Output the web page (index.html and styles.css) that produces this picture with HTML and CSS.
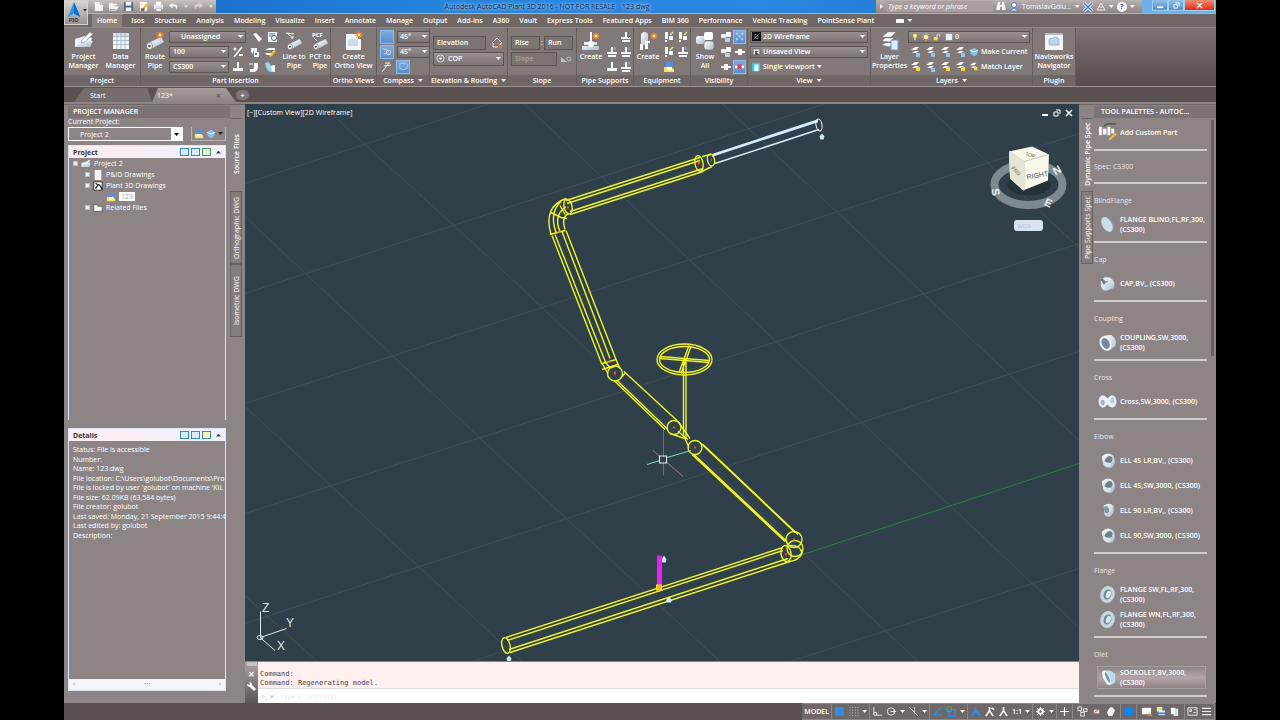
FILE: index.html
```html
<!DOCTYPE html>
<html lang="en">
<head>
<meta charset="utf-8">
<title>Autodesk AutoCAD Plant 3D 2016 - 123.dwg</title>
<link rel="stylesheet" href="styles.css">
</head>
<body>
<svg class="defs" aria-hidden="true">
  <defs>
    <linearGradient id="metal" x1="0" y1="0" x2="1" y2="1"><stop offset="0" stop-color="#fff"/><stop offset="1" stop-color="#a9bccf"/></linearGradient>
  </defs>
  <symbol id="i-new" viewBox="0 0 12 12"><path d="M2 1h6l3 3v7H2z" fill="#f7f2f2"/><path d="M8 1v3h3" fill="none" stroke="#aaa"/></symbol>
  <symbol id="i-open" viewBox="0 0 12 12"><path d="M1 2h4l1 1h4v2H1z" fill="#e8efe9"/><path d="M1 10V4h4l4 2h3l-3 5z" fill="#f4f4ee"/><path d="M2 9l8 1" stroke="#6bb08b"/></symbol>
  <symbol id="i-save" viewBox="0 0 12 12"><path d="M1 1h10v10H1z" fill="#536b83"/><path d="M3 1h6v4H3zM3 7h6v4H3z" fill="#f5f7f9"/></symbol>
  <symbol id="i-saveas" viewBox="0 0 12 12"><path d="M2 1h8v10H2z" fill="#f5f2ea"/><path d="M4 9l5-6 2 1-5 6z" fill="#e9b42c"/><path d="M3 8h4v3H3z" fill="#536b83"/></symbol>
  <symbol id="i-print" viewBox="0 0 12 12"><path d="M3 1h6v4H3z" fill="#fff"/><path d="M1 4h10v5H1z" fill="#e6e6ee"/><path d="M3 8h6v3H3z" fill="#fff" stroke="#889"  stroke-width=".6"/></symbol>
  <symbol id="i-undo" viewBox="0 0 12 12"><path d="M5 2L1 5l4 3V6c3-1 4 1 4 3 3-4 0-6-4-5z" fill="#eef4fb"/></symbol>
  <symbol id="i-redo" viewBox="0 0 12 12"><path d="M7 2l4 3-4 3V6C4 5 3 7 3 9 0 5 3 3 7 4z" fill="#ddd5d5"/></symbol>
  <symbol id="i-project" viewBox="0 0 20 20"><path d="M1 8l10-3 7 2-2 9H1z" fill="#eef2f6"/><path d="M1 16h15l3-6H6z" fill="url(#metal)"/><path d="M8 9l8-8 3 2-8 8-4 1z" fill="#fff" stroke="#8d97a3" stroke-width=".7"/></symbol>
  <symbol id="i-data" viewBox="0 0 20 20"><path d="M2 2h16v16H2z" fill="#eef3f8"/><path d="M2 2h16v3H2z" fill="#cfe0f3"/><path d="M2 5.500h16M2 9.500h16M2 13.500h16M6 2v16M10 2v16M14 2v16" stroke="#98a7ba" stroke-width=".7"/></symbol>
  <symbol id="i-pipe" viewBox="0 0 20 20"><path d="M3 12L16 6l3 5L6 18z" fill="url(#metal)"/><ellipse cx="4.500" cy="15" rx="3" ry="3.500" fill="#fff" stroke="#646c75" stroke-width=".8"/><circle cx="4.500" cy="15" r="1.300" fill="#4d4a4a"/></symbol>
  <symbol id="i-spark" viewBox="0 0 8 8"><path d="M4 0l1 2 2-1-1 2 2 1-2 1 1 2-2-1-1 2-1-2-2 1 1-2-2-1 2-1-1-2 2 1z" fill="#ff8a24"/><circle cx="4" cy="4" r="1.200" fill="#fff0b0"/></symbol>
  <symbol id="i-route" viewBox="0 0 20 20"><use href="#i-pipe" width="20" height="20"/><use href="#i-spark" x="11" y="0" width="8" height="8"/></symbol>
  <symbol id="i-line" viewBox="0 0 20 20"><path d="M2 2l8 1M4 3l5 4M7 7h2V5" fill="none" stroke="#fff"/><use href="#i-pipe" x="2" y="3" width="17" height="17"/></symbol>
  <symbol id="i-ortho" viewBox="0 0 20 20"><path d="M2 3h12v5h3v11H2z" fill="#f2f6fa"/><path d="M4 9l5-2 5 2v6H4z" fill="#cbdcec"/><use href="#i-spark" x="11" y="0" width="8" height="8"/></symbol>
  <symbol id="i-support" viewBox="0 0 20 20"><path d="M9 1h2v10H9z" fill="#f5f5f5"/><path d="M3 11h13v3H3zM1 15h17v4H1z" fill="url(#metal)"/><circle cx="10" cy="13" r="3" fill="#fff"/><use href="#i-spark" x="11" y="1" width="8" height="8"/></symbol>
  <symbol id="i-equip" viewBox="0 0 20 20"><path d="M3 3q4-4 7 0v11H3z" fill="url(#metal)"/><path d="M2 13h3v6H2zM7 10h5v2h-2v6H7z" fill="#fff"/><use href="#i-spark" x="12" y="1" width="8" height="8"/></symbol>
  <symbol id="i-show" viewBox="0 0 20 20"><rect x="1" y="5" width="9" height="8" rx="2" fill="url(#metal)"/><rect x="9" y="1" width="9" height="8" rx="2" fill="#fff"/><rect x="9" y="10" width="10" height="9" rx="3" fill="url(#metal)" stroke="#777" stroke-width=".6"/></symbol>
  <symbol id="i-layers" viewBox="0 0 20 20"><path d="M2 6l6-5h8l-5 5zM2 10l3-3h9l-4 4zM2 14l3-2h8l-4 4z" fill="#fff" stroke="#777" stroke-width=".5"/><path d="M11 9h7v10h-7z" fill="#dcecff" stroke="#7095c7"/></symbol>
  <symbol id="i-navis" viewBox="0 0 20 20"><path d="M1 2h18v17H1z" fill="#f4f6f8"/><path d="M1 2h18v2H1z" fill="#aebac6"/><path d="M5 8l7-2 3 2v6H5z" fill="#bcd6ee" stroke="#7da2c4" stroke-width=".6"/></symbol>
  <symbol id="i-tag" viewBox="0 0 12 12"><path d="M2 3l3-1 6 6-3 3z" fill="#fff"/></symbol>
  <symbol id="i-doc" viewBox="0 0 12 12"><path d="M1 1h9v10H1z" fill="#eaf2fa"/><path d="M2 3h6M2 5h4" stroke="#4f7fa8"/><circle cx="7" cy="7" r="2.500" fill="#fff" stroke="#567"/></symbol>
  <symbol id="i-slash" viewBox="0 0 12 12"><path d="M2 11L10 1" stroke="#fff" stroke-width="1.500"/><circle cx="3" cy="3" r="1.500" fill="#fff"/><path d="M7 8h4v2H7z" fill="#fff"/></symbol>
  <symbol id="i-elbow" viewBox="0 0 12 12"><path d="M6 2h4v5q-1 4-5 4H2V8h3q1 0 1-2z" fill="#f3f6fa"/><path d="M1 3h4" stroke="#fff"/></symbol>
  <symbol id="i-tee" viewBox="0 0 12 12"><path d="M5 1h2v6h4v3H1V7h4z" fill="#f2f6fa"/></symbol>
  <symbol id="i-parts" viewBox="0 0 12 12"><path d="M3 6V2h6v4h2v5H6V5H5v3z" fill="#eef2f6"/><path d="M7 7h2v2H7z" fill="#777"/></symbol>
  <symbol id="i-yellow" viewBox="0 0 12 12"><path d="M1 4l4-2h6v2H1zM1 7h7v2H3z" fill="#fff"/><path d="M5 10l5-6 2 1-5 6z" fill="#f2c72e"/></symbol>
  <symbol id="i-blue" viewBox="0 0 12 12"><path d="M1 4l5-3 5 3-2 6-3 1-4-3z" fill="#7fc2f1"/><path d="M1 4l5 2 5-2" stroke="#fff" fill="none"/></symbol>
  <symbol id="i-bend" viewBox="0 0 12 12"><path d="M1 2l4-1 2 4 4-1v7H6Q2 9 1 2z" fill="#9bd0f5"/><path d="M7 5l4-1v7l-3-1z" fill="#f3faff"/></symbol>
  <symbol id="i-lay" viewBox="0 0 12 12"><path d="M1 4l4-3h4L6 4zM2 7l3-2h4L6 7z" fill="#fff"/><path d="M6 7h4v4H6z" fill="#8cc7f7"/></symbol>
  <symbol id="i-layy" viewBox="0 0 12 12"><path d="M1 4l4-3h4L6 4zM2 7l3-2h4L6 7z" fill="#fff"/><path d="M6 6h4v4H6z" fill="#ffd23c"/></symbol>
  <symbol id="i-compass" viewBox="0 0 12 12"><path d="M2 3q4-2 8 0v5q-4 3-8 0zM5 2l2 2" fill="none" stroke="#a9d0fb"/></symbol>
  <symbol id="i-snap" viewBox="0 0 12 12"><path d="M1 3l5 1M2 9l4-3" stroke="#b9d8fb"/><circle cx="7" cy="7" r="2.500" fill="#b88fae" stroke="#e9dbe9"/></symbol>
  <symbol id="i-dots" viewBox="0 0 12 12"><path d="M2 2h2v2H2zM8 2h2v2H8zM5 5h2v2H5zM2 8h2v2H2zM8 8h2v2H8z" fill="#b5dcff"/></symbol>
  <symbol id="i-eraser" viewBox="0 0 12 12"><path d="M1 11L8 2M4 2h5M3 5l7-1" stroke="#eee" fill="none"/></symbol>
  <symbol id="i-sup" viewBox="0 0 12 12"><path d="M5 1h2v5h4v2H1V6h4zM2 9h8v2H2z" fill="#f2f4f7"/><path d="M9 1v3" stroke="#7abaf0"/></symbol>
  <symbol id="i-supr" viewBox="0 0 12 12"><path d="M5 1h2v5h4v2H1V6h4zM2 9h8v2H2z" fill="#f2f4f7"/><path d="M8 4l3 3M11 4L8 7" stroke="#e9453c"/></symbol>
  <symbol id="i-eq" viewBox="0 0 12 12"><path d="M2 1h3v7H2zM6 5h4v4H6zM2 9h2v2H2z" fill="#f3f5f8"/><path d="M7 4l3-3" stroke="#dfeaa6" stroke-width="1.500"/></symbol>
  <symbol id="i-cubes" viewBox="0 0 12 12"><rect x="1" y="3" width="5" height="4" rx="1" fill="#eef2f8"/><rect x="6" y="1" width="5" height="5" rx="1" fill="#fff"/><rect x="5" y="7" width="5" height="4" rx="1" fill="#b5d6f5"/></symbol>
  <symbol id="i-valve" viewBox="0 0 12 12"><path d="M1 5h10v2H1zM4 3h4v6H4z" fill="#f5f5f5"/></symbol>
  <symbol id="i-valver" viewBox="0 0 12 12"><path d="M1 5h3v3H1zM8 5h3v3H8z" fill="#f5f5f5"/><path d="M4 4l4 4M8 4L4 8" stroke="#e13c46" stroke-width="2"/></symbol>
  <symbol id="i-vport" viewBox="0 0 12 12"><path d="M1 1h10v10H1z" fill="#36c3e8"/><path d="M4 3h5v8H4z" fill="#f4fbff"/></symbol>
  <symbol id="i-black" viewBox="0 0 12 12"><path d="M0 0h12v12H0z" fill="#111"/><path d="M4 3l4 2v4L4 8zM2 10l8-8" stroke="#ddd" stroke-width=".6" fill="none"/></symbol>
  <symbol id="i-view" viewBox="0 0 12 12"><path d="M1 2h10v9H1z" fill="#5b5556"/><path d="M2 3h8v2H4v5H2zM6 7l4-2v5z" fill="#f2eeee"/></symbol>
  <symbol id="i-bulb" viewBox="0 0 12 12"><circle cx="6" cy="4" r="3" fill="#fff06a"/><path d="M5 6h2v5H5z" fill="#efe6a0"/></symbol>
  <symbol id="i-sun" viewBox="0 0 12 12"><path d="M6 0v12M0 6h12M2 2l8 8M10 2l-8 8" stroke="#ffd95a"/><circle cx="6" cy="6" r="3" fill="#fff2a0"/></symbol>
  <symbol id="i-lock" viewBox="0 0 12 12"><path d="M1 6h6v5H1z" fill="#ffd94b"/><path d="M6 6V3q2-3 4 0v2" fill="none" stroke="#f3e6b0" stroke-width="1.500"/></symbol>
  <symbol id="i-home" viewBox="0 0 12 12"><path d="M1 6l5-5 5 5-2 1v1M2 6v4h5" fill="none" stroke="#f4efef"/><path d="M7 7l4 4M11 8l-3 3" stroke="#ee6c49" stroke-width="1.500"/></symbol>
  <symbol id="i-folder" viewBox="0 0 12 10"><path d="M1 1h4l1 2h5v6H1z" fill="#fff" stroke="#333" stroke-width=".7"/></symbol>
  <symbol id="i-sheet" viewBox="0 0 12 12"><path d="M2 0h8v12H2z" fill="#fff1f1"/></symbol>
  <symbol id="i-p3d" viewBox="0 0 12 12"><path d="M1 1h10v10H1z" fill="#fff" stroke="#222"/><path d="M3 3l5 2 3 5M3 9l3-4" stroke="#111" stroke-width="1.500" fill="none"/></symbol>
  <symbol id="i-dwg" viewBox="0 0 12 12"><path d="M3 1h7v6H3z" fill="#5c8fd6"/><path d="M1 6h6l4 2v3H1z" fill="#f4e06a"/><path d="M4 6h5v3H4z" fill="#fff"/></symbol>
  <symbol id="p-disc" viewBox="0 0 20 20"><ellipse cx="11" cy="10" rx="5" ry="8.500" transform="rotate(-30 11 10)" fill="#8597a9"/><ellipse cx="9.500" cy="10" rx="5" ry="8.500" transform="rotate(-30 9.500 10)" fill="#cbdbe8"/></symbol>
  <symbol id="p-cap" viewBox="0 0 20 20"><path d="M3 8q3-6 10-4 7 5 3 11l-8 3q-6-1-5-10z" fill="url(#metal)"/><path d="M3 6l3 5 5-4-4-3z" fill="#6b747e"/><path d="M5 5l3 3 3-1-3-4z" fill="#dbe9f5"/></symbol>
  <symbol id="p-coup" viewBox="0 0 20 20"><path d="M6 3l8-1q7 5 4 12l-7 5z" fill="url(#metal)"/><ellipse cx="8" cy="11" rx="6" ry="8" transform="rotate(-25 8 11)" fill="#eef6fc"/><ellipse cx="8" cy="11" rx="4" ry="6" transform="rotate(-25 8 11)" fill="#78889a"/></symbol>
  <symbol id="p-cross" viewBox="0 0 20 20"><ellipse cx="5" cy="10" rx="4.500" ry="6.500" fill="#dceaf6"/><ellipse cx="15" cy="10" rx="4.500" ry="6.500" fill="#dceaf6"/><path d="M5 6l10 8M5 14l10-8" stroke="#eaf4fc" stroke-width="5"/><ellipse cx="5" cy="11" rx="2" ry="3" fill="#a3b4c4"/><ellipse cx="15" cy="9" rx="2" ry="3" fill="#b4c7d8"/></symbol>
  <symbol id="p-ell" viewBox="0 0 20 20"><path d="M4 6q6-6 12-1 4 7-1 12-5 2-9-2z" fill="url(#metal)"/><ellipse cx="11" cy="10" rx="3.500" ry="5" transform="rotate(35 11 10)" fill="#6f7f8c"/><path d="M4 6q3 8 10 6l-2 5-6-2z" fill="#d5e5f2"/></symbol>
  <symbol id="p-ell9" viewBox="0 0 20 20"><path d="M6 5q6-4 10 0 2 7-3 11-4 2-6-2z" fill="url(#metal)"/><ellipse cx="9" cy="9" rx="2.500" ry="4" transform="rotate(-15 9 9)" fill="#8495a6"/></symbol>
  <symbol id="p-flange" viewBox="0 0 20 20"><ellipse cx="10" cy="10" rx="7.500" ry="9" transform="rotate(20 10 10)" fill="#c3d9e5"/><ellipse cx="10" cy="10" rx="4" ry="5.500" transform="rotate(20 10 10)" fill="#76899a"/><ellipse cx="11" cy="10" rx="2.500" ry="4" transform="rotate(20 11 10)" fill="#d9e8ef"/></symbol>
  <symbol id="p-olet" viewBox="0 0 20 20"><path d="M3 4q7-4 14 2v9q-5 5-9 2z" fill="#b9dcec"/><ellipse cx="8" cy="10" rx="3.500" ry="8" transform="rotate(-25 8 10)" fill="#eaf6fc"/><ellipse cx="9" cy="10" rx="1.500" ry="6" transform="rotate(-25 9 10)" fill="#7d94a4"/></symbol>
</svg>

<div class="app">
  <header class="top">
    <button class="appbtn" aria-label="Application menu">
      <svg width="16" height="18" viewBox="0 0 16 18"><path d="M8 0l7 17-7-4-7 4z" fill="#1c9bee"/><path d="M8 0l7 17-7-4z" fill="#0b6fd0"/></svg>
      <span class="appver">P3D</span><i class="caret"></i>
    </button>
    <div class="titlebar">
      <div class="quick">
        <button aria-label="New"><svg><use href="#i-new"/></svg></button>
        <button aria-label="Open"><svg><use href="#i-open"/></svg></button>
        <button aria-label="Save"><svg><use href="#i-save"/></svg></button>
        <button aria-label="Save as"><svg><use href="#i-saveas"/></svg></button>
        <button aria-label="Plot"><svg><use href="#i-print"/></svg></button>
        <button aria-label="Undo"><svg><use href="#i-undo"/></svg></button><i class="caret"></i>
        <button aria-label="Redo"><svg><use href="#i-redo"/></svg></button><i class="caret"></i><i class="caret"></i>
      </div>
      <div class="title"><span>Autodesk AutoCAD Plant 3D 2016 - NOT FOR RESALE</span><span>123.dwg</span></div>
      <div class="info">
        <i class="caret side"></i>
        <input class="search" aria-label="Search" placeholder="Type a keyword or phrase">
        <svg width="10" height="9" viewBox="0 0 10 9"><path d="M2 0h2v3h2V0h2l2 8H6V5H4v3H0z" fill="#f4f0f0"/></svg>
        <svg width="10" height="10" viewBox="0 0 10 10"><circle cx="5" cy="3" r="2.500" fill="#fff" stroke="#4f7bd5"/><path d="M1 9q4-5 8 0z" fill="#fff" stroke="#4f7bd5"/></svg>
        <span class="user">TomislavGolu...</span><i class="caret"></i>
        <svg width="10" height="10" viewBox="0 0 10 10"><path d="M1 1l8 8M9 1L1 9" stroke="#fff" stroke-width="3"/><path d="M1 1l8 8M9 1L1 9" stroke="#3c7fd8" stroke-width="1.500"/></svg>
        <svg width="10" height="9" viewBox="0 0 10 9"><path d="M5 1l4 7H1zM3 5h4" fill="none" stroke="#f0e8f0"/></svg><i class="caret"></i>
        <button class="help" aria-label="Help">?</button><i class="caret"></i>
      </div>
      <div class="winctl"><button aria-label="Minimize"><svg viewBox="0 0 8 8"><path d="M0 5h7v2H0z" fill="#fff"/></svg></button><button aria-label="Restore"><svg viewBox="0 0 8 8"><path d="M3 1h4v4M1 3h4v4H1z" fill="none" stroke="#fff"/></svg></button><button class="close" aria-label="Close"><svg viewBox="0 0 8 8"><path d="M1 1l6 6M7 1L1 7" stroke="#fff" stroke-width="1.500"/></svg></button></div>
    </div>
    <nav class="rtabs">
      <button class="on">Home</button><button>Isos</button><button>Structure</button><button>Analysis</button><button>Modeling</button><button>Visualize</button><button>Insert</button><button>Annotate</button><button>Manage</button><button>Output</button><button>Add-ins</button><button>A360</button><button>Vault</button><button>Express Tools</button><button>Featured Apps</button><button>BIM 360</button><button>Performance</button><button>Vehicle Tracking</button><button>PointSense Plant</button>
      <button class="mini" aria-label="Ribbon display"><i class="pill"></i><i class="caret"></i></button>
    </nav>
  </header>

  <div class="ribbon">
    <section class="panel w76"><div class="pbody">
      <button class="big"><svg><use href="#i-project"/></svg><span>Project<br>Manager</span></button>
      <button class="big"><svg><use href="#i-data"/></svg><span>Data<br>Manager</span></button>
    </div><h2>Project</h2></section>

    <section class="panel w190"><div class="pbody">
      <button class="big narrow"><svg><use href="#i-route"/></svg><span>Route<br>Pipe</span></button>
      <div class="rows">
        <div><select class="wide" aria-label="Line number"><option>Unassigned</option></select><button class="ic" aria-label="Tag"><svg><use href="#i-tag"/></svg></button><button class="ic" aria-label="Line list"><svg><use href="#i-doc"/></svg></button></div>
        <div><select class="mid" aria-label="Size"><option>100</option></select><button class="ic" aria-label="Slope"><svg><use href="#i-slash"/></svg></button><button class="ic" aria-label="Weld"><svg><use href="#i-parts"/></svg></button><button class="ic" aria-label="Edit"><svg><use href="#i-yellow"/></svg></button></div>
        <div><select class="mid" aria-label="Spec"><option>CS300</option></select><button class="ic" aria-label="Stub-in"><svg><use href="#i-tee"/></svg></button><button class="ic" aria-label="Elbow"><svg><use href="#i-elbow"/></svg></button><button class="ic" aria-label="Bend"><svg><use href="#i-bend"/></svg></button></div>
      </div>
      <button class="big narrow"><svg><use href="#i-line"/></svg><span>Line to<br>Pipe</span></button>
      <button class="big narrow"><svg viewBox="0 0 20 20"><text class="pcf" x="2" y="6">PCF</text><path d="M4 7l3 3" stroke="#fff"/><use href="#i-pipe" x="2" y="3" width="17" height="17"/></svg><span>PCF to<br>Pipe</span></button>
    </div><h2>Part Insertion</h2></section>

    <section class="panel w46"><div class="pbody"><button class="big"><svg><use href="#i-ortho"/></svg><span>Create<br>Ortho View</span></button></div><h2>Ortho Views</h2></section>

    <section class="panel w53"><div class="pbody"><div class="rows">
      <div><button class="ic lit" aria-label="Toggle compass"></button><select class="deg" aria-label="Compass angle"><option>45°</option></select></div>
      <div><button class="ic lit" aria-label="Toggle snap"><svg><use href="#i-snap"/></svg></button><select class="deg" aria-label="Snap angle"><option>45°</option></select></div>
      <div><button class="ic" aria-label="Plane"><svg><use href="#i-eraser"/></svg></button><button class="ic lit" aria-label="Tolerance"><svg><use href="#i-compass"/></svg></button></div>
    </div></div><h2>Compass <i class="caret"></i></h2></section>

    <section class="panel w77"><div class="pbody"><div class="rows two">
      <div><input class="elev" aria-label="Elevation" value="Elevation"><button class="ic" aria-label="Elevation marker"><svg><use href="#i-home"/></svg></button></div>
      <div class="withicon"><svg class="target" viewBox="0 0 10 10"><circle cx="5" cy="5" r="4" fill="none" stroke="#d5e5f5"/><circle cx="5" cy="5" r="1.500" fill="#d5e5f5"/></svg><select class="cop" aria-label="Routing"><option>COP</option></select></div>
    </div></div><h2>Elevation &amp; Routing <i class="caret"></i></h2></section>

    <section class="panel w69"><div class="pbody"><div class="rows two">
      <div><input class="rise" aria-label="Rise" value="Rise"><span>:</span><input class="rise" aria-label="Run" value="Run"></div>
      <div><input class="slope" aria-label="Slope" value="Slope" disabled><button class="ic dim" aria-label="Slope toggle"><svg viewBox="0 0 12 12"><path d="M1 4l6 5H1z" fill="#eee"/><circle cx="9" cy="6" r="2" fill="none" stroke="#eee"/></svg></button></div>
    </div></div><h2>Slope</h2></section>

    <section class="panel w57"><div class="pbody">
      <button class="big narrow"><svg><use href="#i-support"/></svg><span>Create</span></button>
      <div class="rows end">
        <div><button class="ic" aria-label="Support 1"><svg><use href="#i-supr"/></svg></button></div>
        <div><button class="ic" aria-label="Support 2"><svg><use href="#i-sup"/></svg></button><button class="ic" aria-label="Support 3"><svg><use href="#i-sup"/></svg></button></div>
        <div><button class="ic" aria-label="Support 4"><svg><use href="#i-tee"/></svg></button><button class="ic" aria-label="Support 5"><svg><use href="#i-sup"/></svg></button></div>
      </div>
    </div><h2>Pipe Supports</h2></section>

    <section class="panel w57"><div class="pbody">
      <button class="big narrow"><svg><use href="#i-equip"/></svg><span>Create</span></button>
      <div class="rows">
        <div><button class="ic" aria-label="Equipment 1"><svg><use href="#i-eq"/></svg></button><button class="ic" aria-label="Equipment 2"><svg><use href="#i-eq"/></svg></button></div>
        <div><button class="ic" aria-label="Equipment 3"><svg><use href="#i-eq"/></svg></button><button class="ic" aria-label="Equipment 4"><svg><use href="#i-sup"/></svg></button></div>
        <div><button class="ic" aria-label="Equipment 5"><svg><use href="#i-dwg"/></svg></button></div>
      </div>
    </div><h2>Equipment</h2></section>

    <section class="panel w57"><div class="pbody">
      <button class="big narrow"><svg><use href="#i-show"/></svg><span>Show<br>All</span></button>
      <div class="rows">
        <div><button class="ic" aria-label="Hide"><svg><use href="#i-cubes"/></svg></button><button class="ic lit" aria-label="Toggle parts"><svg><use href="#i-dots"/></svg></button></div>
        <div><button class="ic" aria-label="Isolate"><svg><use href="#i-cubes"/></svg></button><button class="ic" aria-label="Valve"><svg><use href="#i-valve"/></svg></button></div>
        <div><button class="ic" aria-label="Insulation"><svg><use href="#i-valve"/></svg></button><button class="ic lit" aria-label="Disconnects"><svg><use href="#i-valver"/></svg></button></div>
      </div>
    </div><h2>Visibility</h2></section>

    <section class="panel w122"><div class="pbody"><div class="rows fill">
      <div class="withicon"><svg class="lead" ><use href="#i-black"/></svg><select class="full" aria-label="Visual style"><option>2D Wireframe</option></select></div>
      <div class="withicon"><svg class="lead"><use href="#i-view"/></svg><select class="full" aria-label="Saved view"><option>Unsaved View</option></select></div>
      <div><button class="text"><svg class="s10"><use href="#i-vport"/></svg>Single viewport <i class="caret"></i></button></div>
    </div></div><h2>View <i class="caret"></i></h2></section>

    <section class="panel w163"><div class="pbody">
      <button class="big prop"><svg><use href="#i-layers"/></svg><span>Layer<br>Properties</span></button>
      <div class="rows fill">
        <div class="withicon"><span class="lead strip"><svg class="s8"><use href="#i-bulb"/></svg><svg class="s8"><use href="#i-sun"/></svg><svg class="s8"><use href="#i-lock"/></svg><i class="sw"></i></span><select class="layer" aria-label="Layer"><option>0</option></select></div>
        <div><button class="ic s" aria-label="Off"><svg><use href="#i-lay"/></svg></button><button class="ic s" aria-label="Isolate"><svg><use href="#i-lay"/></svg></button><button class="ic s" aria-label="Freeze"><svg><use href="#i-lay"/></svg></button><button class="ic s" aria-label="Lock"><svg><use href="#i-lay"/></svg></button><button class="text"><svg class="s10"><use href="#i-blue"/></svg>Make Current</button></div>
        <div><button class="ic s" aria-label="On"><svg><use href="#i-layy"/></svg></button><button class="ic s" aria-label="Unisolate"><svg><use href="#i-lay"/></svg></button><button class="ic s" aria-label="Thaw"><svg><use href="#i-layy"/></svg></button><button class="ic s" aria-label="Unlock"><svg><use href="#i-layy"/></svg></button><button class="text"><svg class="s10"><use href="#i-layy"/></svg>Match Layer</button></div>
      </div>
    </div><h2>Layers <i class="caret"></i></h2></section>

    <section class="panel w43"><div class="pbody"><button class="big"><svg><use href="#i-navis"/></svg><span>Navisworks<br>Navigator</span></button></div><h2>Plugin</h2></section>
  </div>

  <div class="files">
    <button class="ftab">Start</button><button class="ftab on">123*<span>×</span></button><button class="plus" aria-label="New tab">+</button>
  </div>

  <main>
    <aside class="pm">
      <div class="pmmain">
        <h3>PROJECT MANAGER</h3>
        <label for="proj">Current Project:</label>
        <div class="projrow">
          <select id="proj"><option>Project 2</option></select>
          <div class="pmtools"><button aria-label="New project item"><svg class="s10"><use href="#i-dwg"/></svg></button><button class="rep" aria-label="Reports"><svg class="s10"><use href="#i-blue"/></svg><i class="caret"></i></button></div>
        </div>
        <section class="box tree">
          <header><b>Project</b><i class="tb"></i><i class="tb"></i><i class="tb g"></i><i class="caret up"></i></header>
          <ul>
            <li><i class="ex"></i><svg><use href="#i-project"/></svg>Project 2</li>
            <li class="l1"><i class="ex"></i><svg><use href="#i-sheet"/></svg>P&amp;ID Drawings</li>
            <li class="l1"><i class="ex"></i><svg><use href="#i-p3d"/></svg>Plant 3D Drawings</li>
            <li class="l2"><svg><use href="#i-dwg"/></svg><span class="sel">123</span></li>
            <li class="l1"><i class="ex"></i><svg><use href="#i-folder"/></svg>Related Files</li>
          </ul>
        </section>
        <section class="box details">
          <header><b>Details</b><i class="tb"></i><i class="tb"></i><i class="tb y"></i><i class="caret up"></i></header>
          <div class="dtext">
            <p>Status: File is accessible</p><p>Number:</p><p>Name: 123.dwg</p><p>File location: C:\Users\golubot\Documents\Pro</p><p>File is locked by user 'golubot' on machine 'KIL</p><p>File size: 62.09KB (63,584 bytes)</p><p>File creator: golubot</p><p>Last saved: Monday, 21 September 2015 9:44:4</p><p>Last edited by: golubot</p><p>Description:</p>
          </div>
          <div class="hbar"><span>‹</span><span>⋯</span><span>›</span></div>
        </section>
      </div>
      <div class="vtabs"><button class="on">Source Files</button><button>Orthographic DWG</button><button>Isometric DWG</button></div>
    </aside>

    <div class="center">
      <div class="canvas">
        <svg class="model" viewBox="245 103 834 558" preserveAspectRatio="xMidYMid slice">
          <g stroke="#3e505a" stroke-width="1" fill="none">
            <path d="M245 183L490 103M245 293L835 100M245 403L490 324 1079 133M245 513L490 434 1079 243M245 623L490 543 1079 351M370 694L800 555M790 661L1079 568"/>
            <path d="M245 595L317 661M245 406L490 632 522 661M245 216L490 447 720 661M320 103L490 258 918 661M524 103L1079 627M722 103L1079 440M924 103L1079 247"/>
          </g>
          <path d="M800 555L1079 463" stroke="#2c7a3d"/>
          <g class="pipe">
            <path d="M566 200L700 157M567 203L700 160M570 211L703 168M570 214L703 171"/>
            <ellipse cx="699" cy="163" rx="4" ry="8" transform="rotate(-10 699 163)"/><ellipse cx="711" cy="159.500" rx="3.500" ry="6" transform="rotate(-10 711 159.500)"/>
            <path d="M702 156l9-2M702 171l10-5"/>
            <ellipse cx="568" cy="206" rx="4" ry="7.500" transform="rotate(-12 568 206)"/>
            <path d="M566 198Q543 206 551 234M569 213Q561 216 565 229M561 201Q549 212 556 232M566 206Q553 215 560 231M551 212l10 5 6 1M560 205l5 9"/>
            <path d="M550 234l15-4M552 235L602 364M555 234L606 363M562 231L610 358M566 230L616 359"/>
            <path d="M602 363l14-4 4 9M602 363l6 10M606 362q4 8 10 3M602 369l16-5"/>
            <circle cx="615" cy="373" r="7.500"/>
            <path d="M624 371L677 420M614 380L665 429M617 380L668 429M622 376L625 373"/>
            <circle cx="674" cy="427" r="7"/>
            <path d="M678 421l12 17M670 433l15 5 4 9M678 431l10 8"/>
            <circle cx="695" cy="447" r="7"/>
            <path d="M700 442L795 532M703 444L798 534M692 454L785 541M694 454L787 541"/>
            <circle cx="794" cy="539" r="8"/><circle cx="795" cy="548" r="8"/><ellipse cx="786" cy="553" rx="5" ry="8" transform="rotate(-10 786 553)"/><path d="M788 545q13-1 14 8M789 561q10-1 13-8"/>
            <path d="M506 637L783 547M507 640L783 550M509 649L788 558M510 652L790 561"/>
            <ellipse cx="506" cy="645" rx="4" ry="8" transform="rotate(-14 506 645)"/>
            <ellipse cx="684.500" cy="359" rx="27.500" ry="15.500"/><ellipse cx="684.500" cy="359" rx="25" ry="13"/>
            <path d="M660 356l49 4M660 358l49 4M689 345l-10 27M691 346l-10 27M683.500 359V437M686 359V437"/>
          </g>
          <path d="M713 154L818 119.500M712 155.500L818 121M715 163L819 129" stroke="#d5eaff" fill="none" stroke-width="1.500"/><ellipse cx="819" cy="124.500" rx="3" ry="6" fill="none" stroke="#fff" transform="rotate(-10 819 124.500)"/>
          <path d="M822 133l2.500 3-1 3h-3l-1-3zM664 555l2.500 4-1 3h-3l-1-3zM669 596l3 4-1 2h-4l-1-2zM509 655l2.500 3-1 3h-3l-1-3z" fill="#cdeefa"/>
          <path d="M657 555h5v30h-5z" fill="#f11bf5"/><rect x="656.500" y="584.500" width="5" height="5" fill="#ffae22" stroke="#ffe100"/>
          <g fill="#ff4a22"><path d="M698 161h2v3h-2zM711 158h1v3h-1zM567 206h2v2h-2zM557 231h4v1h-4zM607 361h4v1h-4zM614 371h2v3h-2zM673 426h2v2h-2zM694 446h2v2h-2zM793 538h2v2h-2zM785 553h2v2h-2z"/></g>
          <path d="M663.500 429v27M663.500 462v13" stroke="#5b6cc8"/><path d="M647 464l13-4M667 457l24-7" stroke="#74e0ae"/><path d="M653 450l7 6M667 462l16 14" stroke="#a9757d"/><rect x="659.500" y="455.500" width="7" height="7" fill="none" stroke="#e9f2fa"/>
          <g stroke="#dce8ee" fill="none"><path d="M260.500 611v26l26-9M260 637l15 13"/><ellipse cx="260" cy="637" rx="3" ry="2"/></g>
          <g class="axis"><text x="262" y="611">Z</text><text x="286" y="626">Y</text><text x="277" y="649">X</text></g>
          <g class="cube">
            <ellipse cx="1028.500" cy="184" rx="34" ry="20.500" fill="none" stroke="#7c8991" stroke-width="8"/>
            <ellipse cx="1029" cy="184" rx="22" ry="11" fill="#202a31" opacity=".6"/>
            <path d="M1009 151l23-5 17 8-1 26-25 10-13-12z" fill="#f6f6e9"/><path d="M1009 151l15 10 25-7M1024 161v29" fill="none" stroke="#c9cbbd"/>
            <path d="M1009 151l15 10v29l-14-12z" fill="#e4e5d4"/>
            <text class="face" x="1027" y="179" transform="rotate(-10 1027 179)">RIGHT</text>
            <text class="face s" x="1025" y="155" transform="rotate(15 1025 155)">TOP</text>
            <text class="face s" x="1011" y="168" transform="rotate(45 1011 168)">FRO</text>
            <text class="dir" x="991" y="195" transform="rotate(80 995 192)">S</text><text class="dir" x="1045" y="206" transform="rotate(25 1048 202)">E</text><text class="dir" x="1053" y="174" transform="rotate(-30 1056 170)">N</text>
            <rect x="1014" y="219.500" width="29" height="11" rx="3" fill="#d9e2f3"/><text class="wcs" x="1017" y="227">WCS</text>
          </g>
        </svg>
        <div class="vlabel">[−][Custom View][2D Wireframe]</div>
        <div class="vctl"><button aria-label="Minimize view"><svg viewBox="0 0 8 8"><path d="M1 5h6v2H1z" fill="#fff"/></svg></button><button aria-label="Restore view"><svg viewBox="0 0 8 8"><path d="M3 1h4v4M1 3h4v4H1z" fill="none" stroke="#fff"/></svg></button><button aria-label="Close view"><svg viewBox="0 0 8 8"><path d="M1 1l6 6M7 1L1 7" stroke="#fff" stroke-width="1.500"/></svg></button></div>
      </div>
      <div class="cmd">
        <div class="grip"><i></i><span>✕</span><svg width="9" height="9" viewBox="0 0 9 9"><path d="M2 0l1 2-1 1-2-1q0 3 3 3l4 4 2-2-4-4q0-3-3-3z" fill="#fff"/></svg></div>
        <div class="cmdmain">
          <div class="log">Command:<br>Command: Regenerating model.</div>
          <label class="prompt"><span>&gt;_ ▾</span><input aria-label="Command" placeholder="Type a command"></label>
        </div>
      </div>
    </div>

    <aside class="tp">
      <div class="vtabs"><button class="on">Dynamic Pipe Spec</button><button>Pipe Supports Spec</button></div>
      <div class="tpmain">
        <h3>TOOL PALETTES - AUTOC...</h3>
        <div class="tpscroll">
          <div class="tplist">
            <div class="add"><button class="item"><svg viewBox="0 0 20 20"><path d="M6 4l3-3h10" stroke="#333" fill="none"/><path d="M1 4h3v9H1zM5 6h4v6H5zM10 4h3v9h-3zM14 6h3v5h-3z" fill="#f4f8fb"/><path d="M11 17l7-7 2 2-7 6z" fill="#f0bd2e"/></svg><span>Add Custom Part</span></button></div>
            <div class="spec">Spec: CS300</div>
            <section><h4>BlindFlange</h4><button class="item"><svg><use href="#p-disc"/></svg><span>FLANGE BLIND,FL,RF,300,<br>(CS300)</span></button></section>
            <section><h4>Cap</h4><button class="item"><svg><use href="#p-cap"/></svg><span>CAP,BV,, (CS300)</span></button></section>
            <section><h4>Coupling</h4><button class="item"><svg><use href="#p-coup"/></svg><span>COUPLING,SW,3000,<br>(CS300)</span></button></section>
            <section><h4>Cross</h4><button class="item"><svg><use href="#p-cross"/></svg><span>Cross,SW,3000, (CS300)</span></button></section>
            <section><h4>Elbow</h4><button class="item"><svg><use href="#p-ell"/></svg><span>ELL 45 LR,BV,, (CS300)</span></button><button class="item"><svg><use href="#p-ell"/></svg><span>ELL 45,SW,3000, (CS300)</span></button><button class="item"><svg><use href="#p-ell9"/></svg><span>ELL 90 LR,BV,, (CS300)</span></button><button class="item"><svg><use href="#p-ell"/></svg><span>ELL 90,SW,3000, (CS300)</span></button></section>
            <section><h4>Flange</h4><button class="item"><svg><use href="#p-flange"/></svg><span>FLANGE SW,FL,RF,300,<br>(CS300)</span></button><button class="item"><svg><use href="#p-flange"/></svg><span>FLANGE WN,FL,RF,300,<br>(CS300)</span></button></section>
            <section><h4>Olet</h4><button class="item hot"><svg><use href="#p-olet"/></svg><span>SOCKOLET,BV,3000,<br>(CS300)</span></button></section>
          </div>
          <div class="tpbar"></div>
        </div>
      </div>
    </aside>
  </main>

  <footer>
    <button class="cell">MODEL</button>
    <div class="cell"><svg viewBox="0 0 12 12"><path d="M1 1h10v10H1z" fill="#1e90f5"/><path d="M1 4.500h10M1 7.500h10M4.500 1v10M7.500 1v10" stroke="#5a89b8" stroke-width=".7"/></svg><svg viewBox="0 0 12 12"><path d="M2 1v10M5 1v10M8 1v10M11 1v10" stroke="#c9c4c4" stroke-dasharray="1 2"/></svg><i class="caret"></i></div>
    <div class="cell"><svg viewBox="0 0 12 12"><path d="M2 1v9h9M2 7h3v3" fill="none" stroke="#eee"/></svg><svg viewBox="0 0 12 12"><circle cx="5.500" cy="6" r="4" fill="none" stroke="#eee"/><path d="M5 6h6M9 4v4" stroke="#eee"/></svg><i class="caret"></i><svg viewBox="0 0 12 12"><path d="M1 1l10 10M7 1v7" stroke="#ddd"/></svg><i class="caret"></i></div>
    <div class="cell"><svg viewBox="0 0 12 12"><path d="M10 1L2 10h9" fill="none" stroke="#1e90f5" stroke-width="1.500"/></svg><svg viewBox="0 0 12 12"><path d="M3 4h7v7H3z" fill="none" stroke="#1e90f5" stroke-width="1.500"/><path d="M1 1h5v5H1z" fill="none" stroke="#3fae6d"/></svg><i class="caret"></i></div>
    <div class="cell"><svg viewBox="0 0 12 12"><path d="M6 1v4M6 5L2 11M6 5l5 5M3 7h7" fill="none" stroke="#1e90f5" stroke-width="2"/></svg><svg viewBox="0 0 12 12"><path d="M6 1v4M6 5L2 11M6 5l4 6M8 2l3 2" fill="none" stroke="#fff" stroke-width="1.800"/></svg><svg viewBox="0 0 12 12"><path d="M6 1v4M6 5L2 11M6 5l4 6" fill="none" stroke="#fff" stroke-width="1.800"/></svg><span>1:1</span><i class="caret"></i></div>
    <div class="cell"><svg viewBox="0 0 12 12"><circle cx="6" cy="6" r="2.500" fill="none" stroke="#fff" stroke-width="2"/><path d="M6 1v2M6 9v2M1 6h2M9 6h2M2.500 2.500l1 1M9.500 2.500l-1 1M2.500 9.500l1-1M9.500 9.500l-1-1" stroke="#fff"/></svg><i class="caret"></i></div>
    <div class="cell"><svg viewBox="0 0 12 12"><path d="M6 1v10M1 6h10" stroke="#fff" stroke-width="1.300"/></svg></div>
    <div class="cell wide"><svg viewBox="0 0 12 12"><path d="M1 1h4v4H1zM7 3h4v3H7zM4 7h4v4H4zM3 5l2 2M7 6L6 7" fill="none" stroke="#eee"/></svg><svg viewBox="0 0 12 12"><path d="M3 4h6v4H3z" fill="#ffdede"/><path d="M4 7l4-3" stroke="#e0262d"/></svg><svg viewBox="0 0 12 12"><path d="M2 7l3-5 3-1 3 4-3 6H4z" fill="#f5f0ee"/></svg></div>
    <div class="cell"><svg viewBox="0 0 12 12"><circle cx="6" cy="6" r="5.500" fill="#0b84f3"/></svg></div>
    <div class="cell wide"><svg viewBox="0 0 12 12"><path d="M1 2h10v7H1z" fill="#fff"/><path d="M9 7l3 4H7z" fill="#f08a28"/></svg><svg viewBox="0 0 12 12"><path d="M2 1h6v5H2z" fill="#d9f09a"/><path d="M4 5h7v5H4z" fill="#e9f6ff"/><path d="M4 7h7v2H4z" fill="#2f8dde"/></svg><svg viewBox="0 0 12 12"><path d="M2 2h5v7H2z" fill="#fff"/><path d="M6 3h4v8H5z" fill="#cdeedb"/></svg></div>
    <div class="cell"><svg viewBox="0 0 12 12"><path d="M1 2h10v8H1zM3 4h2v2H3zM7 7h3M8 4h2" fill="none" stroke="#eee"/></svg><svg viewBox="0 0 12 12"><path d="M1 2.500h10M1 6h10M1 9.500h10" stroke="#eee" stroke-width="1.300"/></svg></div>
  </footer>
</div>
</body>
</html>
```
FILE: styles.css
```css
* { box-sizing: border-box; }
body { margin: 0; background: #000; color: #fff; font: 500 7px/9px "Open Sans", "Noto Sans", sans-serif; }
button, input, select { font: inherit; color: inherit; margin: 0; padding: 0; border: 0; background: none; border-radius: 0; }
button { display: inline-flex; align-items: center; justify-content: center; white-space: nowrap; }
select { appearance: none; -webkit-appearance: none; }
h2, h3, h4, p, ul { margin: 0; padding: 0; font: inherit; list-style: none; }
svg { display: block; flex: none; }
.defs { position: absolute; width: 0; height: 0; }
.caret { display: inline-block; flex: none; width: 5px; height: 3px; background: #f5f0ef; clip-path: polygon(0 0, 100% 0, 50% 100%); }
.caret.up { background: #444; clip-path: polygon(50% 0, 100% 100%, 0 100%); }
.caret.side { width: 3px; height: 5px; clip-path: polygon(0 0, 100% 50%, 0 100%); }

.app { min-height: 100vh; margin: 0 5%; display: flex; flex-direction: column; background: #5a5251; overflow: hidden; }

.top { display: grid; grid-template-columns: 24px 1fr; grid-template-rows: 14px 13px; background: #6f6766; }
.appbtn { grid-row: 1 / 3; height: 25px; display: grid; grid-template-columns: 18px 5px; align-content: center; justify-items: center; background: linear-gradient(#d9d4d3, #9b9492); border: 1px solid #d6d0cf; }
.appbtn svg { grid-column: 1; height: 16px; }
.appbtn .caret { grid-row: 1; grid-column: 2; background: #333; }
.appver { grid-column: 1; font-size: 5px; line-height: 5px; color: #333; font-weight: 700; }
.titlebar { display: flex; align-items: stretch; background: linear-gradient(90deg, #1668c4, #2583dc 30%, #2b87df 60%, #1763c0); border-bottom: 1px solid #b8b0b0; }
.quick { width: 128px; display: flex; align-items: center; gap: 4px; padding-left: 5px; background: linear-gradient(#c9c0c0, #938b8a); overflow: hidden; }
.quick svg { width: 11px; height: 11px; }
.quick .caret { width: 4px; background: #e5dede; margin: 0 1px; }
.title { flex: 1; display: flex; align-items: center; justify-content: center; gap: 7px; color: #0c2850; padding-left: 2px; font-weight: 400; text-shadow: 0 0 3px #b9dcff, 0 0 4px #b9dcff; }
.info { width: 266px; display: flex; align-items: center; gap: 3px; padding-left: 4px; background: linear-gradient(#b9b0b0, #8d8584); }
.search { width: 107px; height: 11px; padding-left: 2px; background: #a79e9d; font-style: italic; }
.search::placeholder { color: #fff; opacity: 1; }
.user { white-space: nowrap; font-weight: 400; }
.help { width: 10px; height: 10px; border-radius: 5px; background: #f7f4f8; color: #2b5cb8; font-weight: 700; }
.winctl { width: 74px; display: flex; padding: 0 1px 2px 10px; background: #6cb0ea; }
.winctl button { width: 16px; background: linear-gradient(#8fc1ea, #5390cb); border: 1px solid #9fd0f2; border-top: 0; }
.winctl .close { flex: 1; background: linear-gradient(#f28a70, #dd2f12); }
.winctl svg { width: 7px; height: 7px; }
.rtabs { display: flex; padding-left: 4px; }
.rtabs button { padding: 0 5px; font-weight: 600; }
.rtabs .on { background: #8d8584; margin-right: 4px; }
.rtabs .mini { margin-left: 12px; gap: 3px; }
.pill { width: 8px; height: 4px; border-radius: 1px; background: #fff; }

.ribbon { display: flex; height: 60px; border-top: 1px solid #8e8685; border-bottom: 1px solid #9a9291; background: linear-gradient(#7b7372, #544c4b); }
.panel { flex: none; display: flex; flex-direction: column; background: #817978; border-right: 1px solid #665e5d; }
.panel h2 { height: 11px; display: flex; align-items: center; justify-content: center; gap: 4px; background: #6f6766; font-weight: 600; white-space: nowrap; }
.pbody { flex: 1; display: flex; padding: 1px 1px 0; }
.w76 { width: 77px; } .w190 { width: 190px; } .w46 { width: 46px; } .w53 { width: 53px; } .w77 { width: 78px; } .w69 { width: 69px; } .w57 { width: 57px; } .w122 { width: 123px; } .w163 { width: 162px; } .w43 { width: 43px; }
.big { flex: 1; min-width: 0; flex-direction: column; justify-content: flex-start; gap: 1px; padding-top: 2px; font-weight: 600; }
.big svg { width: 20px; height: 20px; }
.big.narrow { flex: 0 0 26px; }
.big.prop { flex: 0 0 35px; }
.pcf { font: 700 6px "Open Sans", sans-serif; fill: #fff; }
.rows { display: flex; flex-direction: column; padding: 0 1px; }
.rows > div { display: flex; align-items: center; height: 15px; gap: 1px; }
.rows.two > div { justify-content: space-between; }
.rows.two { padding: 6px 2px 0; flex: 1; gap: 1px; }
.rows.end > div { justify-content: flex-end; }
.rows.fill { flex: 1; }
.ic { width: 14px; height: 14px; margin-left: 1px; flex: none; }
.ic svg { width: 12px; height: 12px; }
.ic.s { width: 13px; }
.w57 .ic { width: 13px; margin-left: 0; }
.ic.lit { background: linear-gradient(#7ba9e0, #5a8ed2); border: 1px solid #8fbbea; }
.ic.lit svg { width: 11px; height: 11px; }
.ic.dim { opacity: .6; }
.ribbon select { height: 12px; padding: 0 9px 0 3px; border: 1px solid #5d5554; color: #fff;
  background: url("data:image/svg+xml,%3Csvg xmlns='http://www.w3.org/2000/svg' width='5' height='3'%3E%3Cpath d='M0 0h5L2.500 3z' fill='white'/%3E%3C/svg%3E") no-repeat right 2px center, linear-gradient(#989090, #7d7574); font-weight: 600; }
.ribbon input { height: 14px; padding: 0 3px; border: 1px solid #5d5554; background: #7c7473; font-weight: 600; min-width: 0; }
.ribbon input:disabled { color: #aaa2a1; }
.ribbon select.wide { width: 77px; padding-left: 11px; margin-right: 2px; }
.ribbon select.mid { width: 60px; }
.ribbon select.deg { width: 33px; padding-left: 2px; margin-left: 2px; }
.elev { width: 53px; }
.ribbon .rise { width: 29px; }
.ribbon .slope { width: 46px; }
.withicon { position: relative; }
.ribbon select.cop { width: 100%; height: 14px; padding-left: 14px; }
.target { position: absolute; left: 3px; width: 9px; height: 9px; }
.lead { position: absolute; left: 2px; width: 9px; height: 9px; }
.ribbon select.full { width: 100%; padding-left: 12px; }
.ribbon select.layer { width: 100%; padding-left: 46px; }
.strip { display: flex; gap: 3px; align-items: center; width: auto; left: 3px; }
.s8 { width: 8px; height: 8px; } .s10 { width: 10px; height: 10px; }
.sw { width: 8px; height: 8px; background: #e6effa; border: 1px solid #999; margin-left: 1px; }
.text { gap: 2px; padding-left: 1px; font-weight: 600; }

.files { display: flex; height: 17px; padding: 1px 0 0 10px; border-bottom: 2px solid #8d8584; align-items: stretch; }
.ftab { width: 78px; padding-left: 16px; justify-content: flex-start; background: #756d6c; clip-path: polygon(10px 0, 94% 0, 100% 100%, 0 100%); }
.ftab.on { width: 84px; padding: 0 15px 0 5px; background: linear-gradient(#a59c9b, #8d8584); justify-content: space-between; clip-path: polygon(6px 0, 88% 0, 100% 100%, 0 100%); }
.ftab span { color: #5b5352; font-size: 9px; }
.plus { width: 13px; height: 10px; align-self: center; border-radius: 5px; background: #7e7675; font-weight: 700; }

main { flex: 1; display: flex; min-height: 0; }
aside { display: flex; background: #8d8585; flex: none; }
.pm { width: 181px; border-top: 1px solid #6f6767; }
.pmmain { width: 162px; margin-left: 4px; display: flex; flex-direction: column; }
h3 { height: 12px; margin-top: 1px; padding-left: 5px; background: #7c7474; line-height: 12px; font-weight: 600; }
.pmmain label { line-height: 8px; }
.projrow { display: flex; justify-content: space-between; margin: 1px 4px 4px 0; height: 14px; }
#proj { width: 115px; border: 1px solid #fff; padding-left: 11px; background: url("data:image/svg+xml,%3Csvg xmlns='http://www.w3.org/2000/svg' width='11' height='12'%3E%3Cpath d='M0 0h11v12H0z' fill='white'/%3E%3Cpath d='M3 5h5L5.500 8z' fill='black'/%3E%3C/svg%3E") no-repeat right top; }
.pmtools { display: flex; gap: 2px; padding: 0 2px; border: 1px solid #b9b1b1; border-top: 0; }
.pmtools .rep { gap: 2px; }
.pmtools .caret { background: #222; }
.box { display: flex; flex-direction: column; border: 1px solid #dbe6fb; margin-right: 4px; overflow: hidden; }
.box header { display: flex; align-items: center; gap: 2px; height: 12px; padding: 0 4px; background: linear-gradient(90deg, #ffecec, #f0f1ff); color: #333; flex: none; }
.box header b { flex: 1; font-weight: 700; }
.box .caret { margin-left: 3px; }
.tb { width: 9px; height: 8px; border: 1px solid #3a86c8; background: #d5ecfb; }
.tb.g { border-color: #499657; background: #dff3df; }
.tb.y { background: #fff0b0; }
.tree { flex: 0 0 275px; border-bottom: 0; }
.tree li { display: flex; align-items: center; height: 11px; gap: 3px; padding-left: 4px; }
.tree li svg { width: 10px; height: 10px; }
.tree .l1 { padding-left: 16px; }
.tree .l2 { padding-left: 37px; }
.ex { width: 5px; height: 5px; background: #e9edf5; border: 1px solid #b9bcc6; }
.sel { background: #fff; color: #a8a0a0; padding: 0 2px; }
.details { flex: 1; margin-top: 8px; margin-bottom: 12px; }
.dtext { height: 99px; padding: 4px 0 0 4px; white-space: nowrap; display: flex; flex-direction: column; justify-content: space-between; }
.hbar { height: 11px; margin-top: auto; display: flex; justify-content: space-between; padding: 0 4px; background: #f6f4fb; color: #777; line-height: 10px; }
.vtabs { display: flex; flex-direction: column; width: 12px; margin-top: 13px; }
.vtabs button { writing-mode: vertical-rl; transform: rotate(180deg); width: 12px; height: 73px; background: #857d7d; border: 1px solid #696161; }
.vtabs .on { background: #8d8585; border-color: #8d8585; border-bottom-color: #696161; font-weight: 600; }

.center { flex: 1; min-width: 0; display: flex; flex-direction: column; }
.canvas { position: relative; flex: 1; min-height: 0; background: #2f404a; }
.model { position: absolute; width: 100%; height: 100%; }
.pipe { fill: none; stroke: #f0f424; stroke-width: 1.4; }
.axis { font: 12px "Liberation Sans", sans-serif; fill: #dce8ee; }
.face { font: 7px "Liberation Sans", sans-serif; fill: #55574f; }
.face.s { font-size: 5px; }
.dir { font: 700 11px "Liberation Sans", sans-serif; fill: #e6eef3; }
.wcs { font: 6px "Liberation Sans", sans-serif; fill: #b3bdd6; }
.vlabel { position: absolute; left: 2px; top: 4px; font-weight: 500; }
.vctl { position: absolute; right: 6px; top: 5px; display: flex; gap: 4px; }
.vctl svg { width: 8px; height: 8px; }
.cmd { flex: none; height: 42px; display: flex; border-top: 1px solid #8d8585; background: #fff; }
.grip { width: 13px; display: flex; flex-direction: column; align-items: center; gap: 4px; background: linear-gradient(#aaa2a2, #5d5555); }
.grip i { width: 10px; height: 4px; background: #c9c2c2; }
.grip span { font-size: 8px; line-height: 8px; font-weight: 700; }
.cmdmain { flex: 1; display: flex; flex-direction: column; }
.log { flex: 1; padding: 8px 2px 0; background: #ffefef; border-bottom: 1px solid #e8dada; color: #4b4545; font: 7px/9px "DejaVu Sans Mono", monospace; }
.prompt { height: 14px; display: flex; align-items: center; gap: 6px; padding-left: 3px; color: #c5c5dc; }
.prompt input { flex: 1; }
.prompt input::placeholder { color: #efe9ef; opacity: 1; }

.tp { width: 137px; border-top: 1px solid #6f6767; }
.tp .vtabs { margin: 13px 1px 0 2px; }
.tpmain { flex: 1; display: flex; flex-direction: column; min-width: 0; }
.tp h3 { padding-left: 7px; flex: none; }
.tpscroll { display: flex; flex: 1 0 0; }
.tplist { flex: 1; margin-right: 4px; padding-top: 2px; }
.tplist > * { border-bottom: 2px solid #d3cccc; }
.add { height: 31px; }
.spec { height: 33px; line-height: 32px; color: #ebe4e4; }
h4 { padding: 11px 0 6px; line-height: 11px; color: #ebe4e4; }
.tplist section { padding-bottom: 4px; }
.item { display: flex; width: 100%; height: 25px; justify-content: flex-start; text-align: left; padding-left: 4px; gap: 3px; line-height: 10px; font-weight: 600; }
.item svg { width: 19px; height: 19px; }
.item.hot { height: 23px; width: 109px; margin: 0 0 2px 3px; padding-left: 1px; gap: 2px; background: linear-gradient(#8e8484, #b3a5a5 50%, #8e8484); border: 1px solid #a79e9e; }
.tpbar { width: 3px; height: 236px; margin: 2px 2px 0 0; background: #675f5f; }

footer { height: 17px; flex: none; display: flex; justify-content: flex-end; align-items: center; padding-right: 1px; }
.cell { height: 17px; display: flex; align-items: center; justify-content: center; gap: 3px; padding: 0 2px; background: #706868; border: 1px solid #8e8685; border-left: 0; font-weight: 600; }
.cell.wide { padding: 0 4px; }
.cell svg { width: 11px; height: 11px; }
```
